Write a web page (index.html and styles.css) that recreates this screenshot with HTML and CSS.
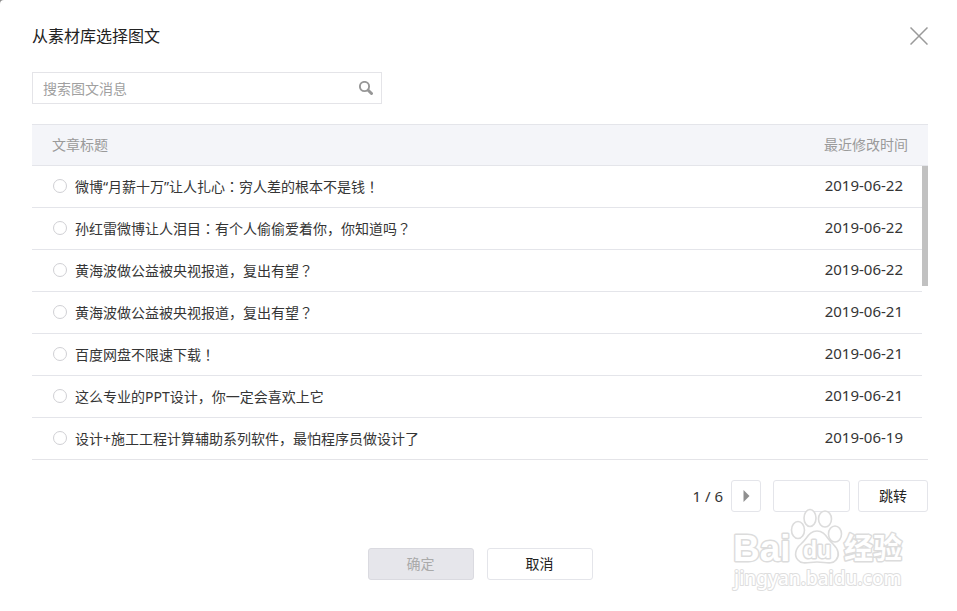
FILE: index.html
```html
<!DOCTYPE html>
<html lang="zh-CN">
<head>
<meta charset="utf-8">
<meta name="viewport" content="width=device-width, initial-scale=1">
<title>从素材库选择图文</title>
<link rel="stylesheet" href="styles.css">
</head>
<body>
<main class="dialog">
  <header class="dialog-head">
    <h1 class="dialog-title">从素材库选择图文</h1>
    <button class="close" type="button" aria-label="关闭">
      <svg viewBox="0 0 18 18" width="18" height="18"><path d="M0.5 0.5L17.5 17.5M17.5 0.5L0.5 17.5" fill="none" stroke="#9a9a9a" stroke-width="1.5"/></svg>
    </button>
  </header>

  <form class="search">
    <input class="search-input" type="text" placeholder="搜索图文消息" aria-label="搜索图文消息">
    <button class="search-button" type="button" aria-label="搜索">
      <svg viewBox="0 0 14 14" width="14" height="14"><circle cx="5.5" cy="5.5" r="4.6" fill="none" stroke="#979797" stroke-width="1.9"/><path d="M9.2 9.2L12.5 12.5" stroke="#979797" stroke-width="3" stroke-linecap="round"/></svg>
    </button>
  </form>

  <table class="articles">
    <thead>
      <tr><th class="col-title">文章标题</th><th class="col-time" colspan="2">最近修改时间</th></tr>
    </thead>
    <tbody>
      <tr><td><label class="choice"><input class="radio" type="radio" name="article"><span>微博“月薪十万”让人扎心<span class="punct">：</span>穷人差的根本不是钱<span class="punct">！</span></span></label></td><td class="date">2019-06-22</td><td class="scroll" rowspan="7"><div class="thumb"></div></td></tr>
      <tr><td><label class="choice"><input class="radio" type="radio" name="article"><span>孙红雷微博让人泪目<span class="punct">：</span>有个人偷偷爱着你，你知道吗<span class="punct">？</span></span></label></td><td class="date">2019-06-22</td></tr>
      <tr><td><label class="choice"><input class="radio" type="radio" name="article"><span>黄海波做公益被央视报道，复出有望<span class="punct">？</span></span></label></td><td class="date">2019-06-22</td></tr>
      <tr><td><label class="choice"><input class="radio" type="radio" name="article"><span>黄海波做公益被央视报道，复出有望<span class="punct">？</span></span></label></td><td class="date">2019-06-21</td></tr>
      <tr><td><label class="choice"><input class="radio" type="radio" name="article"><span>百度网盘不限速下载<span class="punct">！</span></span></label></td><td class="date">2019-06-21</td></tr>
      <tr><td><label class="choice"><input class="radio" type="radio" name="article"><span>这么专业的PPT设计，你一定会喜欢上它</span></label></td><td class="date">2019-06-21</td></tr>
      <tr><td><label class="choice"><input class="radio" type="radio" name="article"><span>设计+施工工程计算辅助系列软件，最怕程序员做设计了</span></label></td><td class="date">2019-06-19</td></tr>
    </tbody>
  </table>

  <nav class="pager">
    <span class="page-count">1 / 6</span>
    <button class="button next" type="button" aria-label="下一页">
      <svg viewBox="0 0 7 12" width="7" height="12"><path d="M0.5 0L6.5 6L0.5 12Z" fill="#8f8f8f"/></svg>
    </button>
    <input class="page-input" type="text" aria-label="页码">
    <button class="button jump" type="button">跳转</button>
  </nav>

  <footer class="actions">
    <button class="button action" type="button" disabled>确定</button>
    <button class="button action" type="button">取消</button>
  </footer>

  <svg class="watermark" viewBox="0 0 180 86" width="180" height="86">
    <g class="mark">
      <text class="mark-latin" x="2" y="55">Bai</text>
      <ellipse cx="67" cy="24" rx="6.5" ry="8.5"/>
      <ellipse cx="79" cy="12" rx="6" ry="8.5"/>
      <ellipse cx="94" cy="13" rx="6.5" ry="8"/>
      <ellipse cx="104" cy="28" rx="6.5" ry="8"/>
      <path d="M86 25C78 25 76 33 70 38C64 43 63 50 67 54C71 59 78 56 86 56C94 56 101 59 105 54C109 49 107 43 102 38C96 33 94 25 86 25Z"/>
      <text class="mark-du" x="72" y="52">du</text>
      <text class="mark-cjk" x="113" y="53">经验</text>
      <text class="mark-url" x="3" y="79">jingyan.baidu.com</text>
    </g>
  </svg>
</main>
</body>
</html>
```

FILE: styles.css
```css
* {
  box-sizing: border-box;
}

body {
  margin: 0;
  background: #8c8c8c;
  color: #353535;
  font: 14px/20px "Noto Sans", "Noto Sans CJK SC", sans-serif;
}

button,
input {
  margin: 0;
  font: inherit;
}

.dialog {
  position: relative;
  min-height: 100vh;
  padding: 24px 29px 31px 32px;
  background: #fff;
  border-top-left-radius: 4px;
}

.dialog-head {
  display: flex;
  align-items: center;
  justify-content: space-between;
  height: 24px;
  margin-bottom: 24px;
}

.dialog-title {
  margin: 0;
  color: #222;
  font-size: 16px;
  font-weight: 400;
  line-height: 24px;
}

.close,
.search-button {
  display: flex;
  padding: 0;
  border: 0;
  background: none;
}

.search {
  display: flex;
  align-items: center;
  width: 350px;
  max-width: 100%;
  height: 32px;
  margin-bottom: 20px;
  padding: 0 8px 0 10px;
  border: 1px solid #e4e4e8;
}

.search-input {
  flex: 1;
  min-width: 0;
  height: 28px;
  padding: 0;
  border: 0;
  outline: 0;
  background: none;
}

.search-input::placeholder {
  color: #a0a0a0;
}

.articles {
  width: 100%;
  border-spacing: 0;
  border-bottom: 1px solid #e4e4e8;
}

.articles th {
  height: 42px;
  padding: 0 20px;
  border: solid #e4e5ea;
  border-width: 1px 0;
  background: #f4f5f9;
  color: #9a9a9a;
  font-weight: 400;
  text-align: left;
}

.articles .col-time {
  text-align: right;
}

.articles td {
  height: 42px;
  padding: 0;
  border-bottom: 1px solid #e4e5ea;
}

.articles tr:last-child td {
  height: 41px;
  border-bottom: 0;
}

.articles .date {
  width: 120px;
  padding: 0 19px 4px 0;
  font-size: 15px;
  text-align: right;
}

.articles .scroll {
  width: 6px;
  border: 0;
  vertical-align: top;
}

.thumb {
  height: 120px;
  background: #c1c1c1;
}

.choice {
  display: flex;
  align-items: center;
  gap: 8px;
  padding-left: 21px;
}

/* Full-width punctuation centred in its cell */
.punct {
  font-family: "Noto Sans CJK TC", sans-serif;
  font-feature-settings: "locl" 0;
  line-height: 1;
}

.radio {
  flex: none;
  width: 14px;
  height: 14px;
  margin-bottom: 2px;
  border: 1px solid #d0d0d4;
  border-radius: 50%;
  appearance: none;
}

.pager {
  display: flex;
  align-items: center;
  justify-content: flex-end;
  height: 32px;
  margin: 20px 0 36px;
}

.page-count {
  margin-right: 8px;
  font-size: 15px;
}

.button,
.page-input {
  height: 32px;
  padding: 0;
  border: 1px solid #e4e5ea;
  border-radius: 3px;
  background: #fff;
  color: #222;
}

.next {
  display: flex;
  align-items: center;
  justify-content: center;
  width: 30px;
  margin-right: 12px;
}

.page-input {
  width: 77px;
  margin-right: 8px;
  padding: 0 8px;
}

.jump {
  width: 70px;
}

.actions {
  display: flex;
  justify-content: center;
  gap: 13px;
}

.action {
  width: 106px;
}

.action:disabled {
  border-color: #dadae0;
  background: #e6e6eb;
  color: #aaa;
}

.watermark {
  position: absolute;
  right: 46px;
  bottom: 19px;
  pointer-events: none;
}

.mark {
  fill: #fff;
  stroke: #dcdcdc;
  stroke-width: 1.6;
  stroke-linejoin: round;
}

.mark text {
  paint-order: stroke;
  stroke-width: 3;
}

.mark-latin {
  font: 700 37px "Liberation Sans", sans-serif;
}

.mark-du {
  font: 700 23px "Liberation Sans", sans-serif;
}

.mark-cjk {
  font: 700 29px "Noto Sans CJK SC", sans-serif;
}

.mark .mark-url {
  font: 500 19px "Noto Sans", sans-serif;
  stroke: #dedede;
  stroke-width: 2;
}
```
